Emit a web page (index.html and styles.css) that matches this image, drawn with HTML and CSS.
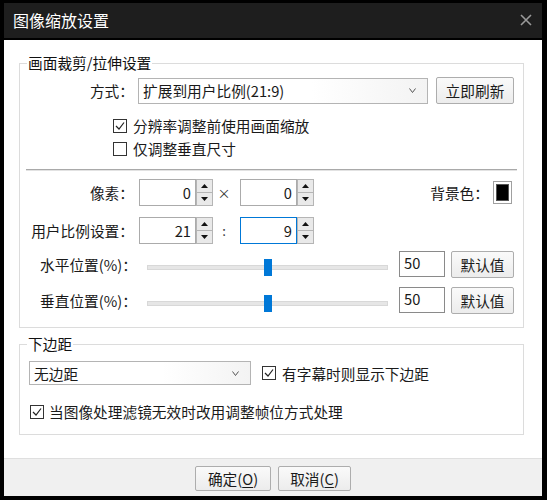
FILE: index.html
```html
<!DOCTYPE html>
<html lang="zh-CN">
<head>
<meta charset="utf-8">
<title>图像缩放设置</title>
<link rel="stylesheet" href="styles.css">
</head>
<body>
<div class="window">
  <div class="titlebar">
    <span class="title">图像缩放设置</span>
    <svg class="close" width="12" height="12" viewBox="0 0 12 12"><path d="M1 1 L11 11 M11 1 L1 11" stroke="#9a9a9a" stroke-width="1.6" fill="none"/></svg>
  </div>
  <div class="body">
    <fieldset class="group g1">
      <legend>画面裁剪/拉伸设置</legend>
      <div class="row r-mode">
        <span class="lbl">方式：</span>
        <div class="combo combo-mode"><span class="combo-text">扩展到用户比例(21:9)</span><svg class="chev" width="7" height="5" viewBox="0 0 7 5"><path d="M0.5 0.5 L3.5 4.5 L6.5 0.5" stroke="#555" stroke-width="1" fill="none"/></svg></div>
        <button class="btn btn-refresh">立即刷新</button>
      </div>
      <div class="check-row cr-1">
        <span class="cb"><svg width="12" height="12" viewBox="0 0 12 12"><path d="M2 6 L5 9 L10 2.5" stroke="#222" stroke-width="1.2" fill="none"/></svg></span>
        <span>分辨率调整前使用画面缩放</span>
      </div>
      <div class="check-row cr-2">
        <span class="cb"></span>
        <span>仅调整垂直尺寸</span>
      </div>
      <div class="sep"></div>
      <div class="row r-px">
        <span class="lbl">像素：</span>
        <div class="spin"><span class="spin-val">0</span><span class="spin-btns"><span class="sb"><svg width="7" height="4" viewBox="0 0 7 4"><path d="M0 4 L3.5 0 L7 4 Z" fill="#111"/></svg></span><span class="sb"><svg width="7" height="4" viewBox="0 0 7 4"><path d="M0 0 L3.5 4 L7 0 Z" fill="#111"/></svg></span></span></div>
        <span class="mid">×</span>
        <div class="spin"><span class="spin-val">0</span><span class="spin-btns"><span class="sb"><svg width="7" height="4" viewBox="0 0 7 4"><path d="M0 4 L3.5 0 L7 4 Z" fill="#111"/></svg></span><span class="sb"><svg width="7" height="4" viewBox="0 0 7 4"><path d="M0 0 L3.5 4 L7 0 Z" fill="#111"/></svg></span></span></div>
        <span class="bg-lbl">背景色：</span>
        <span class="swatch"><span class="swatch-in"></span></span>
      </div>
      <div class="row r-ratio">
        <span class="lbl">用户比例设置：</span>
        <div class="spin"><span class="spin-val">21</span><span class="spin-btns"><span class="sb"><svg width="7" height="4" viewBox="0 0 7 4"><path d="M0 4 L3.5 0 L7 4 Z" fill="#111"/></svg></span><span class="sb"><svg width="7" height="4" viewBox="0 0 7 4"><path d="M0 0 L3.5 4 L7 0 Z" fill="#111"/></svg></span></span></div>
        <span class="mid">:</span>
        <div class="spin"><span class="spin-val focused">9</span><span class="spin-btns"><span class="sb"><svg width="7" height="4" viewBox="0 0 7 4"><path d="M0 4 L3.5 0 L7 4 Z" fill="#111"/></svg></span><span class="sb"><svg width="7" height="4" viewBox="0 0 7 4"><path d="M0 0 L3.5 4 L7 0 Z" fill="#111"/></svg></span></span></div>
      </div>
      <div class="row r-slider r-h">
        <span class="slbl">水平位置(%)：</span>
        <div class="slider"><span class="track"></span><span class="thumb"></span></div>
        <span class="num">50</span>
        <button class="btn btn-def">默认值</button>
      </div>
      <div class="row r-slider r-v">
        <span class="slbl">垂直位置(%)：</span>
        <div class="slider"><span class="track"></span><span class="thumb"></span></div>
        <span class="num">50</span>
        <button class="btn btn-def">默认值</button>
      </div>
    </fieldset>
    <fieldset class="group g2">
      <legend>下边距</legend>
      <div class="row r-margin">
        <div class="combo combo-margin"><span class="combo-text">无边距</span><svg class="chev" width="7" height="5" viewBox="0 0 7 5"><path d="M0.5 0.5 L3.5 4.5 L6.5 0.5" stroke="#555" stroke-width="1" fill="none"/></svg></div>
        <span class="cb cb-sub"><svg width="12" height="12" viewBox="0 0 12 12"><path d="M2 6 L5 9 L10 2.5" stroke="#222" stroke-width="1.2" fill="none"/></svg></span>
        <span class="cb-text">有字幕时则显示下边距</span>
      </div>
      <div class="check-row cr-3">
        <span class="cb"><svg width="12" height="12" viewBox="0 0 12 12"><path d="M2 6 L5 9 L10 2.5" stroke="#222" stroke-width="1.2" fill="none"/></svg></span>
        <span>当图像处理滤镜无效时改用调整帧位方式处理</span>
      </div>
    </fieldset>
  </div>
  <div class="footer">
    <button class="btn btn-ok">确定(<u>O</u>)</button>
    <button class="btn btn-cancel">取消(<u>C</u>)</button>
  </div>
</div>
</body>
</html>
```

FILE: styles.css
```css
* { box-sizing: border-box; }
html, body { margin: 0; padding: 0; background: #000; }
body {
  font-family: "Noto Sans CJK SC", "Microsoft YaHei", "Noto Sans", sans-serif;
  font-size: 14.7px;
  color: #1a1a1a;
}
.window {
  width: 547px;
  height: 500px;
  background: #000;
  padding: 3px 5px 4px 4px;
  display: flex;
  flex-direction: column;
}
.titlebar {
  height: 35px;
  background: #1e1e1e;
  margin-bottom: 2px;
  display: flex;
  align-items: center;
  padding-left: 9px;
  padding-right: 10px;
  flex: none;
}
.title {
  color: #fff;
  font-size: 16px;
  line-height: 20px;
  flex: 1;
  margin-top: -2px;
}
.close { display: block; margin-top: -2px; }

.body {
  height: 418px;
  background: #fff;
  padding: 13px 18px 0 15px;
  flex: none;
}
.group {
  margin: 0;
  border: 1px solid #dcdcdc;
  padding: 0;
  min-width: 0;
}
.group legend {
  font-size: 14.7px;
  line-height: 20px;
  padding: 0 1px;
  margin-left: 7px;
  color: #111;
}
.row {
  display: flex;
  align-items: center;
}
.lbl {
  width: 114px;
  text-align: right;
  flex: none;
  white-space: nowrap;
}
.r-mode { margin-top: 4px; height: 27px; }
.combo {
  height: 26px;
  border: 1px solid #b4b4b4;
  background: linear-gradient(to right, #fff 0%, #fff 60%, #f3f3f3 100%);
  display: flex;
  align-items: center;
  padding: 0 11px 0 4px;
  flex: none;
}
.combo-text { flex: 1; white-space: nowrap; }
.combo-mode { width: 290px; margin-left: 4px; }
.btn {
  font-family: inherit;
  font-size: 14.7px;
  color: #1a1a1a;
  border: 1px solid #adadad;
  border-radius: 2px;
  background: linear-gradient(#fafafa, #ececec);
  padding: 0;
  flex: none;
}
.btn-refresh { width: 78px; height: 27px; margin-left: 8px; }

.check-row {
  display: flex;
  align-items: center;
  height: 23px;
}
.cr-1 { margin-top: 10px; padding-left: 93px; }
.cr-2 { padding-left: 93px; }
.cb {
  width: 14px;
  height: 14px;
  border: 1px solid #333;
  background: #fff;
  margin-right: 6px;
  flex: none;
  display: flex;
  align-items: center;
  justify-content: center;
}
.cb svg { display: block; }
.sep {
  margin: 9px 6px 0 6px;
  height: 2px;
  border-top: 1px solid #a9a9a9;
  border-bottom: 1px solid #e2e2e2;
}
.r-px { margin-top: 8px; height: 27px; }
.r-ratio { margin-top: 11px; height: 27px; }
.spin {
  display: flex;
  height: 27px;
  flex: none;
  margin-left: 5px;
}
.spin-val {
  width: 57px;
  border: 1px solid #ababab;
  text-align: right;
  padding-right: 4px;
  line-height: 25px;
}
.spin-val.focused { border-color: #0078d7; }
.spin-btns {
  width: 17px;
  display: flex;
  flex-direction: column;
}
.sb {
  flex: 1;
  border: 1px solid #b5b5b5;
  background: #e9e9e9;
  display: flex;
  align-items: center;
  justify-content: center;
}
.sb + .sb { border-top: none; }
.sb svg { display: block; }
.mid {
  width: 22px;
  text-align: center;
  flex: none;
  font-size: 13px;
  color: #333;
}
.bg-lbl { margin-left: auto; }
.swatch {
  width: 19px;
  height: 23px;
  border: 1px solid #a0a0a0;
  background: #fff;
  padding: 2px;
  margin-left: 4px;
  margin-right: 11px;
  display: flex;
  flex: none;
}
.swatch-in {
  flex: 1;
  background: #000;
  border: 1px solid #555;
}
.r-slider { height: 26px; }
.r-h { margin-top: 7px; }
.r-v { margin-top: 10px; padding-bottom: 0; }
.slbl {
  width: 127px;
  padding-left: 20px;
  white-space: nowrap;
  flex: none;
}
.slider {
  width: 241px;
  height: 17px;
  position: relative;
  margin-top: 6px;
  flex: none;
}
.track {
  position: absolute;
  left: 0;
  right: 0;
  top: 6px;
  height: 5px;
  background: #e6e6e6;
  border: 1px solid #d8d8d8;
}
.thumb {
  position: absolute;
  left: 117px;
  top: 0;
  width: 8px;
  height: 17px;
  background: #0078d7;
}
.num {
  width: 46px;
  height: 26px;
  margin-left: 11px;
  border: 1px solid #8a8a8a;
  padding-left: 4px;
  line-height: 22px;
  flex: none;
}
.btn-def { width: 63px; height: 27px; margin-left: 6px; }
.g1 { padding-bottom: 14px; }

.g2 { margin-top: 6px; padding-bottom: 11px; }
.r-margin { margin-top: 7px; height: 24px; }
.combo-margin { width: 222px; height: 24px; margin-left: 9px; }
.cb-sub { margin-left: 11px; }
.cr-3 { margin-top: 15px; padding-left: 10px; }
.cr-3 .cb { margin-right: 5px; }

.footer {
  height: 38px;
  background: #f0f0f0;
  border-top: 1px solid #dfdfdf;
  display: flex;
  justify-content: center;
  align-items: flex-start;
  padding-top: 7px;
  gap: 7px;
  flex: none;
}
.btn-ok { width: 76px; height: 25px; }
.btn-cancel { width: 73px; height: 25px; }
u { text-decoration: underline; text-underline-offset: 2px; }
```
